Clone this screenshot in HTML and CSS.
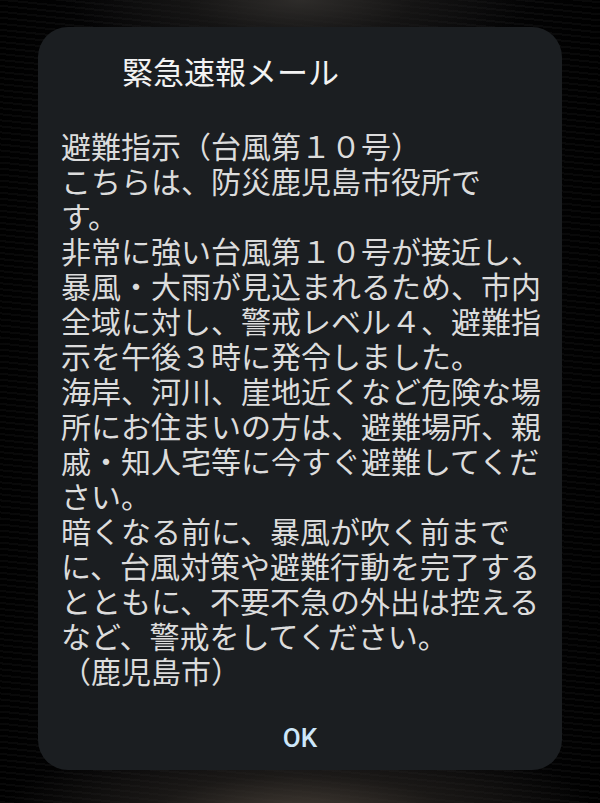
FILE: index.html
```html
<!DOCTYPE html>
<html lang="ja">
<head>
<meta charset="utf-8">
<link rel="stylesheet" href="styles.css">
</head>
<body>
<div class="screen">
  <div class="dialog">
    <div class="title">緊急速報メール</div>
    <div class="message">
      <div class="line">避難指示（台風第１０号）</div>
      <div class="line">こちらは、防災鹿児島市役所で</div>
      <div class="line">す。</div>
      <div class="line">非常に強い台風第１０号が接近し、</div>
      <div class="line">暴風・大雨が見込まれるため、市内</div>
      <div class="line">全域に対し、警戒レベル４、避難指</div>
      <div class="line">示を午後３時に発令しました。</div>
      <div class="line">海岸、河川、崖地近くなど危険な場</div>
      <div class="line">所にお住まいの方は、避難場所、親</div>
      <div class="line">戚・知人宅等に今すぐ避難してくだ</div>
      <div class="line">さい。</div>
      <div class="line">暗くなる前に、暴風が吹く前まで</div>
      <div class="line">に、台風対策や避難行動を完了する</div>
      <div class="line">とともに、不要不急の外出は控える</div>
      <div class="line">など、警戒をしてください。</div>
      <div class="line">（鹿児島市）</div>
    </div>
    <div class="actions"><span class="ok">OK</span></div>
  </div>
</div>
</body>
</html>
```

FILE: styles.css
```css
html, body {
  margin: 0;
  padding: 0;
  background: #000;
}
.screen {
  width: 600px;
  height: 803px;
  box-sizing: border-box;
  padding-top: 27px;
  padding-left: 38px;
  overflow: hidden;
  background:
    radial-gradient(ellipse 230px 70px at 300px 0px, rgba(46,44,42,1), rgba(26,25,24,0.7) 50%, rgba(0,0,0,0) 100%),
    radial-gradient(ellipse 300px 80px at 300px 815px, rgba(72,64,56,0.9), rgba(34,31,28,0.7) 50%, rgba(0,0,0,0) 100%),
    repeating-linear-gradient(6deg, rgba(255,255,255,0.03) 0 2px, rgba(0,0,0,0) 2px 6px),
    linear-gradient(90deg, #000 0%, #08080a 35%, #0e0e10 50%, #08080a 65%, #000 100%);
}
.dialog {
  width: 524px;
  height: 743px;
  background: #1b1e21;
  border-radius: 30px;
  display: flex;
  flex-direction: column;
  font-family: "Noto Sans CJK JP", "Noto Sans", sans-serif;
}
.title {
  padding-top: 26px;
  padding-left: 84px;
  font-size: 31px;
  line-height: 36px;
  color: #f2f2f2;
  white-space: nowrap;
}
.message {
  margin-top: 39px;
  padding-left: 23px;
  font-size: 30px;
  color: #dcdcdc;
  white-space: nowrap;
}
.line {
  height: 35px;
  line-height: 35px;
}
.actions {
  margin-top: auto;
  padding-bottom: 12px;
  display: flex;
  justify-content: center;
}
.ok {
  font-family: Roboto, "Liberation Sans", sans-serif;
  font-weight: 500;
  font-size: 26px;
  line-height: 40px;
  color: #cde7fa;
}
```
